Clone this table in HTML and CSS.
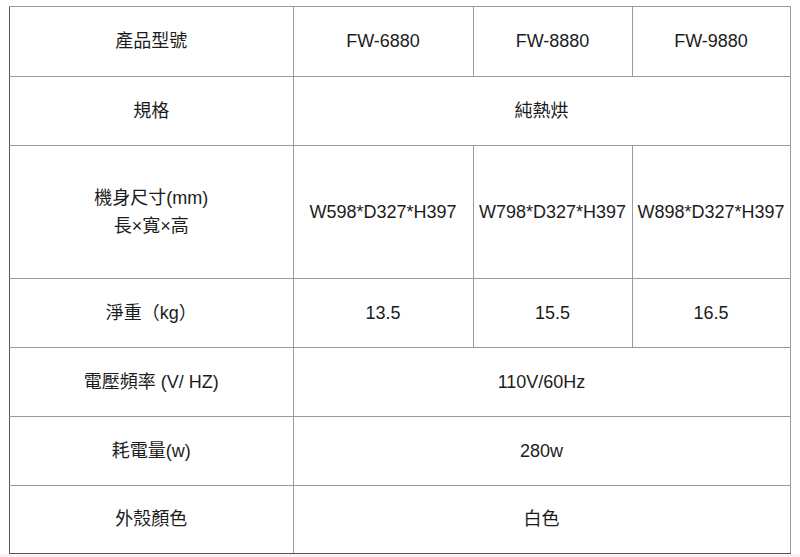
FILE: index.html
```html
<!DOCTYPE html>
<html lang="zh-Hant">
<head>
<meta charset="utf-8">
<title>規格表</title>
<link rel="stylesheet" href="styles.css">
</head>
<body>
<div class="page">
  <table class="spec">
    <colgroup>
      <col class="c-label">
      <col class="c-a">
      <col class="c-b">
      <col class="c-c">
    </colgroup>
    <tr class="r1">
      <td>產品型號</td>
      <td>FW-6880</td>
      <td>FW-8880</td>
      <td>FW-9880</td>
    </tr>
    <tr class="r2">
      <td>規格</td>
      <td colspan="3">純熱烘</td>
    </tr>
    <tr class="r3">
      <td class="two">機身尺寸(mm)<br>長×寬×高</td>
      <td>W598*D327*H397</td>
      <td>W798*D327*H397</td>
      <td>W898*D327*H397</td>
    </tr>
    <tr class="r4">
      <td>淨重（kg）</td>
      <td>13.5</td>
      <td>15.5</td>
      <td>16.5</td>
    </tr>
    <tr class="r5">
      <td>電壓頻率 (V/ HZ)</td>
      <td colspan="3">110V/60Hz</td>
    </tr>
    <tr class="r6">
      <td>耗電量(w)</td>
      <td colspan="3">280w</td>
    </tr>
    <tr class="r7">
      <td>外殼顏色</td>
      <td colspan="3">白色</td>
    </tr>
  </table>
</div>
</body>
</html>
```

FILE: styles.css
```css
html, body {
  margin: 0;
  padding: 0;
}
body {
  background: #fbeff3;
  font-family: "Liberation Sans", "Noto Sans CJK TC", sans-serif;
  color: #1c1c1c;
}
.page {
  background: #ffffff;
  height: 554px;
  padding: 6px 0 0 9px;
  box-sizing: border-box;
}
.spec {
  border-collapse: collapse;
  table-layout: fixed;
  width: 781px;
  font-size: 18px;
}
.c-label { width: 283.5px; }
.c-a { width: 180px; }
.c-b { width: 159px; }
.c-c { width: 158px; }
.spec td {
  border: 1px solid #9a9a9a;
  text-align: center;
  vertical-align: middle;
  padding: 0;
  line-height: 22px;
  white-space: nowrap;
}
.spec tr > td:first-child {
  border-left-color: #555;
}
.spec tr.r7 > td {
  border-bottom-color: #555;
}
.spec td.two {
  line-height: 28px;
}
.r1 { height: 69.5px; }
.r2 { height: 69px; }
.r3 { height: 133.5px; }
.r4 { height: 68.5px; }
.r5 { height: 69.5px; }
.r6 { height: 68.5px; }
.r7 { height: 68.5px; }
```
